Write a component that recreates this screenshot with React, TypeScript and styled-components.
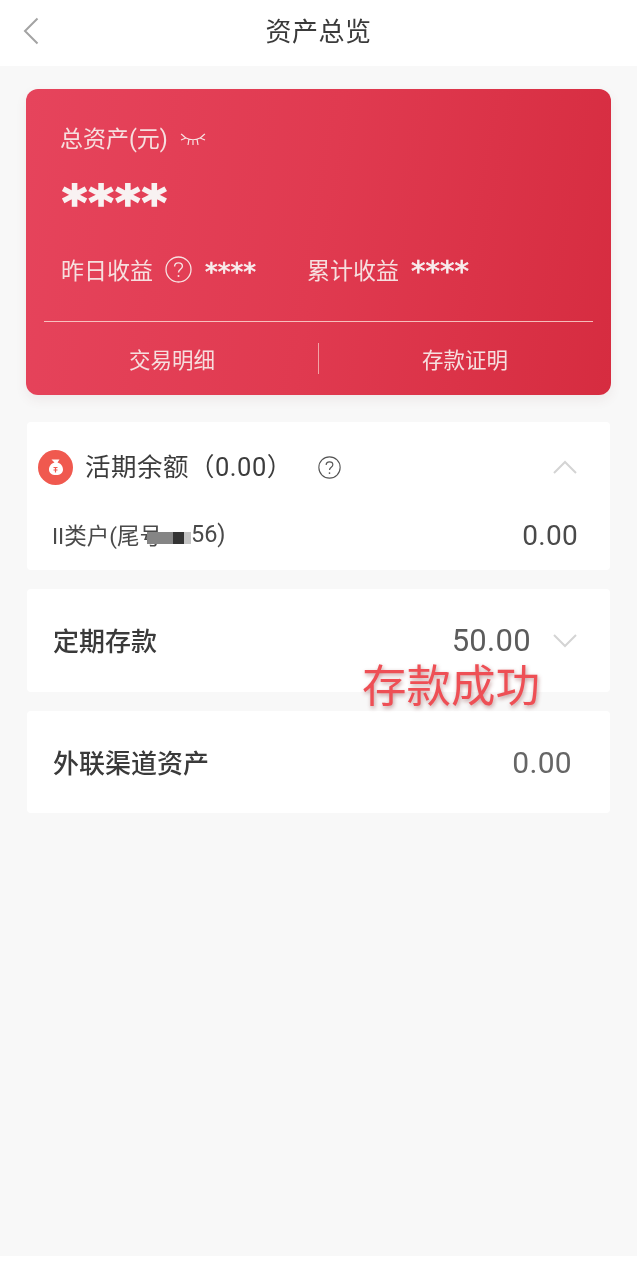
import React from "react";
import styled, { createGlobalStyle } from "styled-components";

const GlobalStyle = createGlobalStyle`
  html, body {
    margin: 0;
    padding: 0;
    background: #f8f8f8;
  }
  * {
    box-sizing: border-box;
  }
`;

const Page = styled.div`
  position: relative;
  width: 637px;
  height: 1286px;
  display: flex;
  flex-direction: column;
  background: #f8f8f8;
  font-family: Roboto, "Noto Sans CJK SC", sans-serif;
  color: #333;
  overflow: hidden;
  filter: blur(0.35px);
`;

const Header = styled.header`
  position: relative;
  flex: none;
  height: 66px;
  padding-bottom: 7px;
  display: flex;
  align-items: center;
  justify-content: center;
  background: #fff;
`;

const Title = styled.h1`
  margin: 0;
  font-size: 26px;
  font-weight: 400;
  letter-spacing: 0.5px;
  color: #3a3a3a;
`;

const BackIcon = styled.svg`
  position: absolute;
  left: 23px;
  top: 17px;
  width: 16px;
  height: 28px;
`;

const Content = styled.main`
  flex: 1;
  display: flex;
  flex-direction: column;
  padding: 23px 26px 0;
`;

const AssetCard = styled.section`
  height: 306px;
  display: flex;
  flex-direction: column;
  padding: 34px 18px 0;
  margin-bottom: 27px;
  border-radius: 12px;
  color: #f6dfdf;
  background: linear-gradient(100deg, #e6445c 0%, #e03a50 50%, #d62c40 100%);
  box-shadow: 0 5px 12px rgba(120, 60, 60, 0.08);
`;

const TotalRow = styled.div`
  display: flex;
  align-items: center;
  gap: 12px;
  padding: 0 0 4px 16px;
  height: 32px;
  font-size: 23px;
  font-weight: 400;
`;

const EyeIcon = styled.svg`
  margin-top: 4px;
  width: 26px;
  height: 13px;
`;

const TotalValue = styled.div`
  padding-left: 18px;
  height: 91px;
  font-family: "DejaVu Sans", sans-serif;
  font-size: 48px;
  line-height: 94px;
  font-weight: 700;
  letter-spacing: 1.5px;
  -webkit-text-stroke: 1.5px #f8f2f2;
  color: #f8f2f2;
`;

const EarningsRow = styled.div`
  display: flex;
  align-items: center;
  padding: 0 0 0 17px;
  height: 34px;
  margin-top: 6px;
  font-size: 23px;
  font-weight: 400;
`;

const Earning = styled.div`
  display: flex;
  align-items: center;
  width: 246px;
`;

const Stars = styled.span<{ $gap: number; $size: number }>`
  margin-left: ${(p) => p.$gap}px;
  font-family: "DejaVu Sans", sans-serif;
  font-size: ${(p) => p.$size}px;
  line-height: 34px;
  height: 30px;
  font-weight: 400;
  -webkit-text-stroke: 0.7px #f8eeee;
  color: #f8eeee;
`;

const HelpIcon = styled.svg`
  flex: none;
  margin-left: 12px;
  width: 27px;
  height: 27px;
`;

const Links = styled.div`
  flex: 1;
  margin-top: 35px;
  display: flex;
  align-items: center;
  border-top: 1px solid rgba(255, 235, 225, 0.75);
`;

const CardLink = styled.div`
  flex: 1;
  height: 31px;
  padding-right: 18px;
  display: flex;
  align-items: center;
  justify-content: center;
  font-size: 21.5px;
  font-weight: 400;

  & + & {
    padding: 0 0 0 18px;
    border-left: 1px solid rgba(255, 235, 225, 0.6);
  }
`;

const Panel = styled.section`
  margin: 0 1px 19px;
  padding: 0 32px 0 26px;
  background: #fff;
  border-radius: 4px;
`;

const PanelRow = styled.div<{ $height: number }>`
  height: ${(p) => p.$height}px;
  display: flex;
  align-items: center;
  justify-content: space-between;
`;

const RowLead = styled.div`
  display: flex;
  align-items: center;
`;

const RowTail = styled.div`
  display: flex;
  align-items: center;
`;

const CoinBadge = styled.svg`
  flex: none;
  margin-left: -15px;
  margin-right: 12px;
  width: 35px;
  height: 35px;
`;

const BalanceTitle = styled.span`
  padding-bottom: 6px;
  font-size: 25.5px;
  font-weight: 400;
  letter-spacing: 0.5px;
  color: #3c3c3c;
`;

const BalanceHelp = styled.svg`
  margin-left: 25px;
  width: 23px;
  height: 23px;
`;

const SubRow = styled(PanelRow)`
  margin-bottom: 12px;
`;

const SubLabel = styled.span`
  display: flex;
  align-items: center;
  margin-left: -1px;
  padding-bottom: 3px;
  font-size: 22.5px;
  font-weight: 400;
  color: #4a4a4a;
`;

const Masked = styled.span`
  position: relative;
  width: 44px;
  height: 12px;
  margin: 9px 0 0 -15px;
  background: linear-gradient(
    90deg,
    #858585 0 58%,
    #333 58% 84%,
    #c4c4c4 84% 100%
  );
`;

const Tail = styled.span`
  font-size: 23.5px;
`;

const PanelTitle = styled.span`
  padding-bottom: 2px;
  font-size: 26px;
  font-weight: 500;
  color: #3a3a3a;
`;

const Amount = styled.span<{ $size: number; $color?: string }>`
  font-size: ${(p) => p.$size}px;
  color: ${(p) => p.$color || "#4a4a4a"};
  letter-spacing: 0.3px;
`;

const InsetAmount = styled(Amount)`
  margin-right: 6px;
`;

const Chevron = styled.svg`
  width: 26px;
  height: 16px;
`;

const ChevronSlot = styled.div`
  display: flex;
  margin-left: 21px;
`;

const Footer = styled.footer`
  flex: none;
  height: 30px;
  background: #fff;
`;

const Stamp = styled.div`
  position: absolute;
  left: 362px;
  top: 659px;
  font-size: 44.5px;
  line-height: 56px;
  font-weight: 400;
  color: #ee4f55;
  text-shadow: 1px 2px 4px rgba(120, 40, 40, 0.45);
`;

const Help = ({ color, as }: { color: string; as: typeof HelpIcon }) => {
  const Icon = as;
  return (
    <Icon viewBox="0 0 27 27" fill="none">
      <circle cx="13.5" cy="13.5" r="12.5" stroke={color} strokeWidth="1.3" />
      <path
        d="M9.6 10.6c0-2.2 1.7-3.7 3.9-3.7s3.9 1.4 3.9 3.4c0 2.9-3.9 3-3.9 6.2"
        stroke={color}
        strokeWidth="1.4"
      />
      <circle cx="13.5" cy="20" r="1" fill={color} />
    </Icon>
  );
};

const App: React.FC = () => {
  return (
    <>
      <GlobalStyle />
      <Page>
        <Header>
          <BackIcon viewBox="0 0 16 28" fill="none">
            <path d="M14.5 1.5 2 14l12.500 12.500" stroke="#a3a3a3" strokeWidth="2" />
          </BackIcon>
          <Title>资产总览</Title>
        </Header>
        <Content>
          <AssetCard>
            <TotalRow>
              总资产(元)
              <EyeIcon viewBox="0 0 26 13" fill="none">
                <path
                  d="M1 1c2 1 3 3 5 4 4 2 10 2 14 0 2-1 3-3 5-4M1 7l5-2M25 7l-5-2M9 6l-1 6M13 7v5M17 6l1 6"
                  stroke="#f7e3e3"
                  strokeWidth="1.2"
                />
              </EyeIcon>
            </TotalRow>
            <TotalValue>****</TotalValue>
            <EarningsRow>
              <Earning>
                昨日收益
                <Help color="#f7e3e3" as={HelpIcon} />
                <Stars $gap={13} $size={25.5}>
                  ****
                </Stars>
              </Earning>
              <Earning>
                累计收益
                <Stars $gap={12} $size={29}>
                  ****
                </Stars>
              </Earning>
            </EarningsRow>
            <Links>
              <CardLink>交易明细</CardLink>
              <CardLink>存款证明</CardLink>
            </Links>
          </AssetCard>

          <Panel>
            <PanelRow $height={90}>
              <RowLead>
                <CoinBadge viewBox="0 0 35 35">
                  <circle cx="17.500" cy="17.500" r="17.500" fill="#f0594f" />
                  <path
                    d="M13.500 9.500h8l-2 3c3.500 1 5.500 4 5.500 7 0 3.500-2.500 5.500-7 5.500s-7-2-7-5.500c0-3 2-6 5.500-7z"
                    fill="#fff"
                  />
                  <path d="M15.500 17.500h4M15.500 20h4M17.500 17.500v5" stroke="#f0594f" strokeWidth="1.200" />
                </CoinBadge>
                <BalanceTitle>活期余额（0.00）</BalanceTitle>
                <Help color="#555" as={BalanceHelp} />
              </RowLead>
              <ChevronSlot>
                <Chevron viewBox="0 0 26 16" fill="none">
                  <path d="M2 14 13 3l11 11" stroke="#d4d4d4" strokeWidth="2" />
                </Chevron>
              </ChevronSlot>
            </PanelRow>
            <SubRow $height={46}>
              <SubLabel>
                II类户(尾号
                <Masked />
                <Tail>56)</Tail>
              </SubLabel>
              <Amount $size={28}>0.00</Amount>
            </SubRow>
          </Panel>

          <Panel>
            <PanelRow $height={103}>
              <PanelTitle>定期存款</PanelTitle>
              <RowTail>
                <Amount $size={31} $color="#5c5c5c">
                  50.00
                </Amount>
                <ChevronSlot>
                  <Chevron viewBox="0 0 26 16" fill="none">
                    <path d="M2 2l11 11L24 2" stroke="#d4d4d4" strokeWidth="2" />
                  </Chevron>
                </ChevronSlot>
              </RowTail>
            </PanelRow>
          </Panel>

          <Panel>
            <PanelRow $height={102}>
              <PanelTitle>外联渠道资产</PanelTitle>
              <InsetAmount $size={30} $color="#666">
                0.00
              </InsetAmount>
            </PanelRow>
          </Panel>
        </Content>
        <Footer />
        <Stamp>存款成功</Stamp>
      </Page>
    </>
  );
};

export default App;
